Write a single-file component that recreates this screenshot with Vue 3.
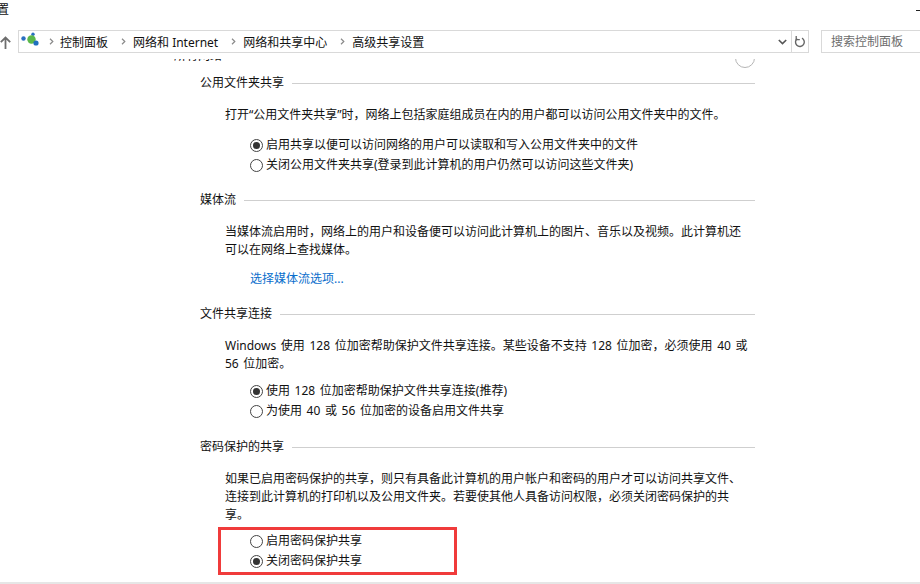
<script setup>
const sections = [
  {
    title: '公用文件夹共享',
    paras: ['打开“公用文件夹共享”时，网络上包括家庭组成员在内的用户都可以访问公用文件夹中的文件。'],
    radios: [
      { label: '启用共享以便可以访问网络的用户可以读取和写入公用文件夹中的文件', on: true },
      { label: '关闭公用文件夹共享(登录到此计算机的用户仍然可以访问这些文件夹)', on: false }
    ]
  },
  {
    title: '媒体流',
    paras: ['当媒体流启用时，网络上的用户和设备便可以访问此计算机上的图片、音乐以及视频。此计算机还可以在网络上查找媒体。'],
    link: '选择媒体流选项...',
    radios: []
  },
  {
    title: '文件共享连接',
    paras: ['Windows 使用 128 位加密帮助保护文件共享连接。某些设备不支持 128 位加密，必须使用 40 或 56 位加密。'],
    radios: [
      { label: '使用 128 位加密帮助保护文件共享连接(推荐)', on: true },
      { label: '为使用 40 或 56 位加密的设备启用文件共享', on: false }
    ]
  },
  {
    title: '密码保护的共享',
    paras: ['如果已启用密码保护的共享，则只有具备此计算机的用户帐户和密码的用户才可以访问共享文件、连接到此计算机的打印机以及公用文件夹。若要使其他人具备访问权限，必须关闭密码保护的共享。'],
    radios: [
      { label: '启用密码保护共享', on: false },
      { label: '关闭密码保护共享', on: true }
    ],
    boxed: true
  }
]
const crumbs = ['控制面板', '网络和 Internet', '网络和共享中心', '高级共享设置']
</script>

<template>
  <div class="window">
    <div class="titlebar">
      <span class="title">置</span>
      <span class="minimize"></span>
    </div>
    <div class="navbar">
      <svg class="up" width="11" height="13" viewBox="0 0 11 13">
        <path d="M5.5 13V1.5M.8 6.2L5.5 1.5l4.7 4.7" fill="none" stroke="#6d6d6d" stroke-width="1.8" />
      </svg>
      <div class="address">
        <svg class="logo" width="18" height="16" viewBox="0 0 18 16">
          <circle cx="2.5" cy="6.5" r="2.2" fill="#2a6fc0" />
          <circle cx="12" cy="2.2" r="1.7" fill="#2a6fc0" />
          <circle cx="10.5" cy="7.5" r="4.2" fill="#5cb84a" />
          <circle cx="15" cy="11" r="2.6" fill="#1f6fbe" />
        </svg>
        <template v-for="(c, i) in crumbs" :key="c">
          <svg class="sep" :class="{ first: i === 0 }" width="5" height="7" viewBox="0 0 5 7">
            <path d="M1 .8L3.8 3.5 1 6.2" fill="none" stroke="#8a8a8a" stroke-width="1.2" />
          </svg>
          <span class="crumb">{{ c }}</span>
        </template>
        <svg class="chev" width="9" height="6" viewBox="0 0 9 6">
          <path d="M.8 1L4.5 4.6 8.2 1" fill="none" stroke="#555" stroke-width="1.6" />
        </svg>
        <div class="refresh">
          <svg width="12" height="13" viewBox="0 0 12 13">
            <path d="M3.2 3.6A4.4 4.4 0 1 0 8 3.2" fill="none" stroke="#666" stroke-width="1.4" />
            <path d="M2.2 1v3.6h3.6" fill="none" stroke="#666" stroke-width="1.3" />
          </svg>
        </div>
      </div>
      <div class="search">搜索控制面板</div>
    </div>
    <div class="content">
      <div class="topgroup">
        <span class="cliptext">所有网络</span>
        <span class="collapse"></span>
      </div>
      <section v-for="s in sections" :key="s.title" class="section">
        <div class="heading">
          <span>{{ s.title }}</span>
          <i class="rule"></i>
        </div>
        <p v-for="p in s.paras" :key="p" class="para">{{ p }}</p>
        <a v-if="s.link" class="link">{{ s.link }}</a>
        <div v-if="s.radios.length" class="radios" :class="{ boxed: s.boxed }">
          <div v-for="r in s.radios" :key="r.label" class="radio">
            <span class="dot" :class="{ on: r.on }"></span>
            <span>{{ r.label }}</span>
          </div>
        </div>
      </section>
    </div>
  </div>
</template>

<style>
html, body { margin: 0; background: #fff; }
</style>

<style scoped>
.window {
  width: 920px;
  height: 584px;
  overflow: hidden;
  background: #fff;
  display: flex;
  flex-direction: column;
  border-bottom: 2px solid #e6e6e6;
  box-sizing: border-box;
  font-family: "Noto Sans", "Noto Sans CJK SC", sans-serif;
  font-size: 12px;
  color: #111;
}
.titlebar {
  height: 30px;
  flex: none;
  display: flex;
  justify-content: space-between;
  padding-top: 1px;
  box-sizing: border-box;
}
.title {
  margin-left: -3px;
  line-height: 18px;
}
.minimize {
  width: 4px;
  height: 1px;
  background: #222;
  margin-top: 9px;
}
.navbar {
  height: 29px;
  flex: none;
  display: flex;
  align-items: flex-start;
}
.up { margin: 6px 0 0 0; flex: none; }
.address {
  margin-left: 7px;
  width: 791px;
  height: 23px;
  box-sizing: border-box;
  border: 1px solid #d9d9d9;
  display: flex;
  align-items: center;
  padding-left: 2px;
  flex: none;
}
.logo { flex: none; margin-right: 3px; margin-top: -3px; }
.sep { flex: none; margin: 0 7px 0 7px; }
.sep.first { margin-right: 6px; }
.crumb { white-space: nowrap; margin-right: 6px; }
.chev { margin-left: auto; margin-right: 4px; flex: none; }
.refresh {
  width: 16px;
  height: 21px;
  border-left: 1px solid #d9d9d9;
  display: flex;
  align-items: center;
  justify-content: center;
  flex: none;
}
.search {
  margin-left: 12px;
  flex: 1;
  height: 23px;
  box-sizing: border-box;
  border: 1px solid #d9d9d9;
  border-right: none;
  color: #6d6d6d;
  line-height: 21px;
  padding-left: 9px;
}
.content {
  flex: 1;
  min-height: 0;
  overflow: hidden;
  padding-left: 200px;
  width: 755px;
  box-sizing: border-box;
}
.topgroup {
  height: 12px;
  position: relative;
}
.cliptext { position: absolute; left: -26px; top: -12px; line-height: 18px; }
.collapse {
  position: absolute;
  right: 0;
  top: -11px;
  width: 20px;
  height: 20px;
  box-sizing: border-box;
  border: 1px solid #b5b5b5;
  border-radius: 50%;
}
.heading {
  display: flex;
  align-items: center;
  gap: 8px;
  height: 18px;
  line-height: 18px;
  margin-top: 3px;
}
.rule { flex: 1; height: 1px; background: #cfcfcf; }
.para {
  margin: 14px 0 0 25px;
  line-height: 18px;
  width: 527px;
  word-spacing: 1.5px;
}
.link {
  display: block;
  margin: 11px 0 17px 50px;
  line-height: 18px;
  color: #0a6ecc;
}
.radios { margin: 10px 0 0 50px; padding-bottom: 14px; }
.section:nth-of-type(3) .radios { margin-top: 7px; padding-bottom: 15px; }
.radio {
  display: flex;
  align-items: center;
  height: 20px;
  gap: 3px;
  white-space: nowrap;
  word-spacing: 1.5px;
}
.dot {
  width: 13px;
  height: 13px;
  box-sizing: border-box;
  border: 1px solid #444;
  border-radius: 50%;
  flex: none;
  margin-top: 2px;
  position: relative;
}
.dot.on::after {
  content: "";
  position: absolute;
  left: 2px;
  top: 2px;
  width: 7px;
  height: 7px;
  border-radius: 50%;
  background: #333;
}
.section .boxed {
  margin: 3px 0 0 18px;
  width: 239px;
  height: 48px;
  box-sizing: border-box;
  border: 3px solid #f03b3b;
  padding: 0 0 0 29px;
}
</style>
